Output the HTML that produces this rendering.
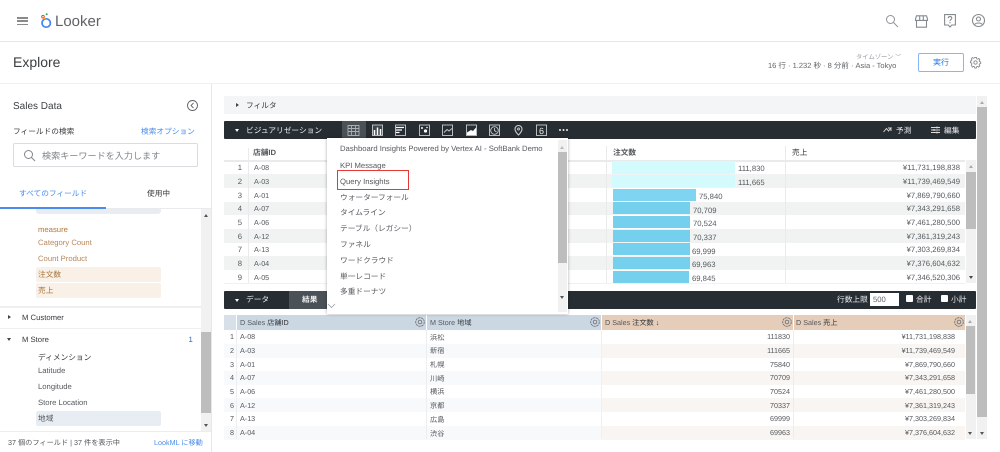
<!DOCTYPE html>
<html lang="ja"><head><meta charset="utf-8"><title>Looker Explore</title>
<style>
html,body{margin:0;padding:0;background:#fff}
body{width:1000px;height:452px;overflow:hidden}
#w{position:relative;width:1000px;height:452px;overflow:hidden;font-family:"Liberation Sans","Noto Sans CJK JP",sans-serif;font-size:7.7px;color:#55595e;text-rendering:geometricPrecision;filter:blur(.25px)}
.t{position:absolute;white-space:nowrap;line-height:12px;margin-top:1px}
.b{position:absolute}
.r{text-align:right}
.d{color:#34383b}
.l{color:#4a8bec}
.o{color:#b8875a}
.n{font-size:7.2px;margin-top:.5px}
svg{position:absolute;overflow:visible}
</style></head><body><div id="w">

<!-- top header -->
<div class="b" style="left:0;top:41px;width:1000px;height:1px;background:#e6e7e8"></div>
<div class="b" style="left:17px;top:17px;width:11px;height:1.6px;background:#8a8a8a"></div>
<div class="b" style="left:17px;top:20.300px;width:11px;height:1.6px;background:#8a8a8a"></div>
<div class="b" style="left:17px;top:23.600px;width:11px;height:1.6px;background:#8a8a8a"></div>
<svg style="left:40px;top:12px" width="14" height="18" viewBox="0 0 14 18"><circle cx="6.200" cy="11" r="4.200" fill="none" stroke="#4285f4" stroke-width="1.700"/><circle cx="3" cy="4.700" r="1.300" fill="none" stroke="#ea4335" stroke-width="1"/><circle cx="6.700" cy="2.300" r="1" fill="#34a853"/><path d="M4 5.800L5.300 7.300" stroke="#fbbc04" stroke-width="1.100"/></svg>
<div class="t" style="left:55px;top:8.500px;font-size:15px;line-height:24px;color:#5f6368">Looker</div>
<svg style="left:886px;top:15px" width="12" height="12" viewBox="0 0 12 12" fill="none" stroke="#8f9498" stroke-width="1"><circle cx="4.500" cy="4.500" r="4"/><path d="M7.500 7.500l4.500 4.500"/></svg>
<svg style="left:915px;top:15px" width="13" height="13" viewBox="0 0 13 13" fill="none" stroke="#858a8e" stroke-width="1.100"><path d="M1.500 .8h10l1 3.200v1.400H.5V4zM1.500 5.400v6.800h10V5.400M4.700 .8v4.600M8.300 .8v4.600"/></svg>
<svg style="left:943.500px;top:14px" width="12" height="14" viewBox="0 0 12 14" fill="none" stroke="#858a8e" stroke-width="1.100"><path d="M.6.600h10.800v10.400H7.800L6 13 4.200 11H.6z"/><path d="M4.200 4.200c0-2.200 3.600-2.200 3.600 0 0 1.400-1.800 1.400-1.800 2.900M6 8v1.200"/></svg>
<svg style="left:972px;top:14px" width="13" height="13" viewBox="0 0 13 13" fill="none" stroke="#858a8e" stroke-width="1.100"><circle cx="6.500" cy="6.500" r="6"/><circle cx="6.500" cy="5" r="2"/><path d="M2.800 10.500c1-2 6.400-2 7.400 0"/></svg>

<!-- explore row -->
<div class="t" style="left:13px;top:51px;font-size:14px;line-height:20px;color:#3c4043">Explore</div>
<div class="b" style="left:0;top:82.500px;width:1000px;height:1.500px;background:#f0f1f2"></div>
<div class="t" style="left:856px;top:51px;font-size:6.300px;color:#9aa0a6">タイムゾーン ﹀</div>
<div class="t" style="left:768px;top:58.500px;font-size:7.500px;color:#5f6368">16 行 · 1.232 秒 · 8 分前 · Asia - Tokyo</div>
<div class="b" style="left:918px;top:53px;width:44px;height:17px;border:1px solid #8ab4f8;border-radius:2px;color:#1a73e8;text-align:center;line-height:17px;font-size:8px">実行</div>
<svg style="left:970px;top:57px" width="11" height="11" viewBox="0 0 11 11" fill="none" stroke="#80868b" stroke-width=".9"><circle cx="5.500" cy="5.500" r="1.700"/><path d="M4.600.5h1.800l.3 1.400 1.100.5 1.200-.8 1.200 1.300-.8 1.100.5 1.100 1.200.3v1.800l-1.300.3-.5 1.100.8 1.100-1.300 1.300-1.100-.8-1.100.5-.3 1.300H4.600l-.3-1.300-1.100-.5-1.100.8L.8 8.700l.8-1.100-.5-1.100-1.300-.3V4.400l1.300-.3.5-1.100-.8-1.100L2.100.6l1.100.8 1.100-.5z" transform="translate(.5 0) scale(.92)"/></svg>

<!-- left panel -->
<div class="b" style="left:211px;top:84px;width:1px;height:368px;background:#e6e7e8"></div>
<div class="t" style="left:13px;top:100px;font-size:10px;color:#3c4043">Sales Data</div>
<svg style="left:187px;top:100px" width="11" height="11" viewBox="0 0 11 11" fill="none" stroke="#5f6368" stroke-width=".9"><circle cx="5.500" cy="5.500" r="5"/><path d="M6.500 3L4 5.500 6.500 8"/></svg>
<div class="t d" style="left:13px;top:125px">フィールドの検索</div>
<div class="t l" style="left:141px;top:125px">検索オプション</div>
<div class="b" style="left:13px;top:143px;width:183px;height:22px;border:1px solid #dadce0;border-radius:2px"></div>
<svg style="left:23px;top:148.500px" width="13" height="13" viewBox="0 0 13 13" fill="none" stroke="#80868b" stroke-width="1"><circle cx="5.500" cy="5.500" r="4"/><path d="M8.500 8.500l3.500 3.500"/></svg>
<div class="t" style="left:42px;top:148.500px;font-size:9.100px;color:#80868b">検索キーワードを入力します</div>
<div class="t l" style="left:19px;top:187px">すべてのフィールド</div>
<div class="t d" style="left:147px;top:187px">使用中</div>
<div class="b" style="left:0;top:208px;width:211px;height:1px;background:#e8eaed"></div>
<div class="b" style="left:0;top:207px;width:106px;height:1.500px;background:#4a8bec"></div>
<div class="b" style="left:36px;top:209px;width:125px;height:5px;background:#e8edf4;border-radius:0 0 3px 3px"></div>
<div class="b" style="left:201px;top:209px;width:10px;height:222px;background:#f1f1f1"></div>
<div class="b" style="left:201px;top:332px;width:10px;height:81px;background:#bdbdbd"></div>
<div class="b" style="left:203.500px;top:214px;border:2.500px solid transparent;border-top:0;border-bottom:3px solid #555"></div>
<div class="b" style="left:203.500px;top:424px;border:2.500px solid transparent;border-bottom:0;border-top:3px solid #555"></div>

<div class="t" style="left:38px;top:223px;color:#b5763a">measure</div>
<div class="t o" style="left:38px;top:236px">Category Count</div>
<div class="t o" style="left:38px;top:252px">Count Product</div>
<div class="b" style="left:36px;top:267px;width:125px;height:15px;background:#f9f0e8;border-radius:2px"></div>
<div class="b" style="left:36px;top:283px;width:125px;height:15px;background:#f9f0e8;border-radius:2px"></div>
<div class="t" style="left:38px;top:268px;color:#a9773f">注文数</div>
<div class="t" style="left:38px;top:284px;color:#a9773f">売上</div>
<div class="b" style="left:0;top:306px;width:201px;height:2px;background:#eeeff0"></div>
<div class="b" style="left:8px;top:315px;border:2.500px solid transparent;border-right:0;border-left:3px solid #444"></div>
<div class="t d" style="left:22px;top:311px">M Customer</div>
<div class="b" style="left:0;top:328px;width:201px;height:1px;background:#eeeff0"></div>
<div class="b" style="left:7px;top:338px;border:2.500px solid transparent;border-bottom:0;border-top:3px solid #444"></div>
<div class="t d" style="left:22px;top:333px">M Store</div>
<div class="t" style="left:188.500px;top:333px;color:#3367b5">1</div>
<div class="t d" style="left:38px;top:351px">ディメンション</div>
<div class="t" style="left:38px;top:364px">Latitude</div>
<div class="t" style="left:38px;top:380px">Longitude</div>
<div class="t" style="left:38px;top:396px">Store Location</div>
<div class="b" style="left:36px;top:411px;width:125px;height:15px;background:#e8edf4;border-radius:2px"></div>
<div class="t" style="left:38px;top:412px">地域</div>
<div class="b" style="left:0;top:431px;width:211px;height:21px;background:#fff;border-top:1px solid #eceded"></div>
<div class="t" style="left:8px;top:436px;font-size:7.200px">37 個のフィールド | 37 件を表示中</div>
<div class="t l" style="left:154px;top:436px;font-size:7.200px">LookML に移動</div>

<!-- main -->
<div class="b" style="left:224px;top:96px;width:752px;height:18px;background:#f4f5f6"></div>
<div class="b" style="left:236px;top:103px;border:2.500px solid transparent;border-right:0;border-left:3px solid #444"></div>
<div class="t d" style="left:246px;top:99px">フィルタ</div>

<div class="b" style="left:977px;top:96px;width:10px;height:343px;background:#f1f1f1"></div>
<div class="b" style="left:977px;top:107px;width:10px;height:310px;background:#bdbdbd"></div>
<div class="b" style="left:979.500px;top:101px;border:2.500px solid transparent;border-top:0;border-bottom:3px solid #aaa"></div>
<div class="b" style="left:979.500px;top:432px;border:2.500px solid transparent;border-bottom:0;border-top:3px solid #555"></div>

<!-- vis bar -->
<div class="b" style="left:224px;top:121px;width:752px;height:18px;background:#262d33;border-radius:1px"></div>
<div class="b" style="left:235px;top:129px;border:2.500px solid transparent;border-bottom:0;border-top:3px solid #fff"></div>
<div class="t" style="left:246px;top:123.500px;color:#eef0f1">ビジュアリゼーション</div>
<div class="b" style="left:342px;top:121px;width:24px;height:18px;background:#4a5157"></div>
<svg style="left:348px;top:124px" width="225" height="14" viewBox="0 0 225 14" fill="none" stroke="#c9ccce" stroke-width=".9">
<path d="M0 1.500h11v10H0zM0 4.500h11M0 7.500h11M3.500 1.500v10M7.500 1.500v10" stroke="#aab0b5"/>
<g transform="translate(24 0)"><rect x=".5" y="1" width="10" height="10.500" fill="#3e464c"/><path d="M2.500 11V6M5.500 11V3.500M8.500 11V5" stroke="#fff" stroke-width="1.500"/></g>
<g transform="translate(47 0)"><rect x=".5" y="1" width="10" height="10.500"/><path d="M1 3.500h8M1 6h6M1 8.500h3.500" stroke="#fff" stroke-width="1.300"/></g>
<g transform="translate(71 0)"><rect x=".5" y="1" width="10" height="10.500"/><circle cx="6.500" cy="7" r="1.600" fill="#fff" stroke="none"/><circle cx="3" cy="4" r="1" fill="#fff" stroke="none"/><circle cx="8" cy="3.500" r=".8" fill="#fff" stroke="none"/></g>
<g transform="translate(94 0)"><rect x=".5" y="1" width="10" height="10.500"/><path d="M2 8.500l3-3 2 1.500 3-2.500"/></g>
<g transform="translate(118 0)"><rect x=".5" y="1" width="10" height="10.500"/><path d="M1 11V8.500L5 6l2 1 3-3.500V11z" fill="#fff" stroke="none"/></g>
<g transform="translate(141 0)"><rect x=".5" y="1" width="10" height="10.500"/><circle cx="5.500" cy="6.500" r="3.800"/><path d="M5.500 4v2.500l2 1.500"/></g>
<g transform="translate(165 0)"><path d="M5.500 1.500a3.500 3.500 0 0 1 3.500 3.500c0 2.500-3.500 6-3.500 6S2 7.500 2 5a3.500 3.500 0 0 1 3.500-3.500z" stroke-width="1.100"/><circle cx="5.500" cy="5" r="1"/></g>
<g transform="translate(188 0)"><rect x=".5" y="1" width="10" height="10.500"/></g>
</svg>
<div class="t" style="left:536px;top:123.500px;width:11px;text-align:center;font-size:9px;color:#eee">6</div>
<div class="b" style="left:558.500px;top:128.500px;width:2px;height:2px;background:#eee;border-radius:50%;box-shadow:3.500px 0 #eee,7px 0 #eee"></div>
<svg style="left:883px;top:126px" width="9" height="8" viewBox="0 0 9 8" fill="none" stroke="#ddd" stroke-width=".9"><path d="M.5 6l3-3.500 2 2.500L8.500 1.500M5 2h3v3"/></svg>
<div class="t" style="left:896px;top:123.500px;color:#e8eaed">予測</div>
<svg style="left:931px;top:126px" width="9" height="8" viewBox="0 0 9 8" fill="none" stroke="#ddd" stroke-width="1"><path d="M0 1.500h9M0 4h9M0 6.500h9M6 .5v2M3 3v2M6 5.500v2"/></svg>
<div class="t" style="left:944px;top:123.500px;color:#e8eaed">編集</div>

<!-- vis table -->
<div class="b" style="left:224px;top:160px;width:741px;height:1.500px;background:#e8eaeb"></div>
<div class="b" style="left:224px;top:174px;width:741px;height:13.700px;background:#f1f3f2"></div>
<div class="b" style="left:224px;top:201.500px;width:741px;height:13.700px;background:#f1f3f2"></div>
<div class="b" style="left:224px;top:229px;width:741px;height:13.500px;background:#f1f3f2"></div>
<div class="b" style="left:224px;top:256px;width:741px;height:13.500px;background:#f1f3f2"></div>
<div class="b" style="left:248px;top:148px;width:1px;height:135px;background:#e8eaeb"></div>
<div class="b" style="left:606px;top:146px;width:1px;height:137px;background:#e8eaeb"></div>
<div class="b" style="left:785px;top:146px;width:1px;height:137px;background:#e8eaeb"></div>
<div class="b" style="left:224px;top:283px;width:741px;height:1px;background:#f0f1f2"></div>
<div class="t" style="left:253px;top:146px;font-weight:bold;color:#55595d">店舗ID</div>
<div class="t" style="left:613px;top:146px;font-weight:bold;color:#55595d">注文数</div>
<div class="t d" style="left:792px;top:146px">売上</div>

<div class="t r" style="left:224px;top:161px;width:18px">1</div><div class="t n" style="left:254px;top:161.500px">A-08</div>
<div class="t r" style="left:224px;top:175px;width:18px">2</div><div class="t n" style="left:254px;top:175px">A-03</div>
<div class="t r" style="left:224px;top:189px;width:18px">3</div><div class="t n" style="left:254px;top:189px">A-01</div>
<div class="t r" style="left:224px;top:202px;width:18px">4</div><div class="t n" style="left:254px;top:202.500px">A-07</div>
<div class="t r" style="left:224px;top:216px;width:18px">5</div><div class="t n" style="left:254px;top:216px">A-06</div>
<div class="t r" style="left:224px;top:230px;width:18px">6</div><div class="t n" style="left:254px;top:230px">A-12</div>
<div class="t r" style="left:224px;top:243px;width:18px">7</div><div class="t n" style="left:254px;top:243.500px">A-13</div>
<div class="t r" style="left:224px;top:257px;width:18px">8</div><div class="t n" style="left:254px;top:257px">A-04</div>
<div class="t r" style="left:224px;top:271px;width:18px">9</div><div class="t n" style="left:254px;top:271px">A-05</div>

<div class="b" style="left:612px;top:161px;width:123px;height:12.500px;background:#d3fbfd"></div>
<div class="b" style="left:612px;top:174.500px;width:123px;height:12.500px;background:#d3fbfd"></div>
<div class="b" style="left:612.500px;top:188.500px;width:83px;height:12px;background:#7fd5f1"></div>
<div class="b" style="left:612.500px;top:202px;width:77.500px;height:12px;background:#75d0ee"></div>
<div class="b" style="left:612.500px;top:216px;width:77.500px;height:12px;background:#75d0ee"></div>
<div class="b" style="left:612.500px;top:229.500px;width:77.500px;height:12px;background:#75d0ee"></div>
<div class="b" style="left:612.500px;top:243px;width:77px;height:12px;background:#75d0ee"></div>
<div class="b" style="left:612.500px;top:257px;width:77px;height:12px;background:#75d0ee"></div>
<div class="b" style="left:612.500px;top:270.500px;width:76.500px;height:12px;background:#75d0ee"></div>
<div class="t" style="left:738px;top:162px">111,830</div>
<div class="t" style="left:738px;top:176px">111,665</div>
<div class="t" style="left:699px;top:190px">75,840</div>
<div class="t" style="left:693px;top:203.500px">70,709</div>
<div class="t" style="left:693px;top:217px">70,524</div>
<div class="t" style="left:693px;top:231px">70,337</div>
<div class="t" style="left:692px;top:245px">69,999</div>
<div class="t" style="left:692px;top:258px">69,963</div>
<div class="t" style="left:692px;top:272px">69,845</div>
<div class="t r" style="left:800px;width:160px;top:161px">¥11,731,198,838</div>
<div class="t r" style="left:800px;width:160px;top:174.500px">¥11,739,469,549</div>
<div class="t r" style="left:800px;width:160px;top:188.500px">¥7,869,790,660</div>
<div class="t r" style="left:800px;width:160px;top:202px">¥7,343,291,658</div>
<div class="t r" style="left:800px;width:160px;top:215.500px">¥7,461,280,500</div>
<div class="t r" style="left:800px;width:160px;top:229.500px">¥7,361,319,243</div>
<div class="t r" style="left:800px;width:160px;top:243px">¥7,303,269,834</div>
<div class="t r" style="left:800px;width:160px;top:256.500px">¥7,376,604,632</div>
<div class="t r" style="left:800px;width:160px;top:270.500px">¥7,346,520,306</div>
<div class="b" style="left:966px;top:160px;width:10px;height:123px;background:#f1f1f1"></div>
<div class="b" style="left:966px;top:172px;width:10px;height:57px;background:#bdbdbd"></div>
<div class="b" style="left:968.500px;top:165px;border:2.500px solid transparent;border-top:0;border-bottom:3px solid #aaa"></div>
<div class="b" style="left:968.500px;top:276px;border:2.500px solid transparent;border-bottom:0;border-top:3px solid #444"></div>

<!-- data bar -->
<div class="b" style="left:224px;top:291px;width:752px;height:17.500px;background:#262d33;border-radius:1px"></div>
<div class="b" style="left:235px;top:299px;border:2.500px solid transparent;border-bottom:0;border-top:3px solid #fff"></div>
<div class="t" style="left:246px;top:293px;color:#eef0f1">データ</div>
<div class="b" style="left:289px;top:291px;width:40px;height:17.500px;background:#4a5157"></div>
<div class="t" style="left:302px;top:293px;font-weight:bold;color:#eef0f1">結果</div>
<div class="t" style="left:837px;top:292.500px;color:#e8eaed">行数上限</div>
<div class="b" style="left:870px;top:293px;width:29px;height:13px;background:#fff;line-height:13px;color:#5f6368;text-indent:3px">500</div>
<div class="b" style="left:906px;top:295px;width:7px;height:7px;background:#fff;border-radius:1px"></div>
<div class="t" style="left:916px;top:292.500px;color:#e8eaed">合計</div>
<div class="b" style="left:941px;top:295px;width:7px;height:7px;background:#fff;border-radius:1px"></div>
<div class="t" style="left:951px;top:292.500px;color:#e8eaed">小計</div>

<!-- data table -->
<div class="b" style="left:224px;top:315px;width:12px;height:14.500px;background:#d7e0e9"></div>
<div class="b" style="left:236.500px;top:315px;width:189px;height:14.500px;background:#cbd8e4"></div>
<div class="b" style="left:426.500px;top:315px;width:174.500px;height:14.500px;background:#cbd8e4"></div>
<div class="b" style="left:602px;top:315px;width:190.500px;height:14.500px;background:#e5cdb9"></div>
<div class="b" style="left:793.500px;top:315px;width:171.500px;height:14.500px;background:#e5cdb9"></div>
<div class="t n" style="left:240px;top:316px">D Sales <span style="color:#34383b">店舗ID</span></div>
<div class="t n" style="left:430px;top:316px">M Store <span style="color:#34383b">地域</span></div>
<div class="t n" style="left:605px;top:316px">D Sales <span style="color:#34383b">注文数 ↓</span></div>
<div class="t n" style="left:796px;top:316px">D Sales <span style="color:#34383b">売上</span></div>
<svg style="left:415px;top:317px" width="10" height="10" viewBox="0 0 10 10" fill="none" stroke="#6f7478" stroke-width=".9"><circle cx="5" cy="5" r="4.300" stroke-dasharray="2.400 .6"/><circle cx="5" cy="5" r="1.800"/></svg>
<svg style="left:590px;top:317px" width="10" height="10" viewBox="0 0 10 10" fill="none" stroke="#6f7478" stroke-width=".9"><circle cx="5" cy="5" r="4.300" stroke-dasharray="2.400 .6"/><circle cx="5" cy="5" r="1.800"/></svg>
<svg style="left:781.500px;top:317px" width="10" height="10" viewBox="0 0 10 10" fill="none" stroke="#6f7478" stroke-width=".9"><circle cx="5" cy="5" r="4.300" stroke-dasharray="2.400 .6"/><circle cx="5" cy="5" r="1.800"/></svg>
<svg style="left:954px;top:317px" width="10" height="10" viewBox="0 0 10 10" fill="none" stroke="#6f7478" stroke-width=".9"><circle cx="5" cy="5" r="4.300" stroke-dasharray="2.400 .6"/><circle cx="5" cy="5" r="1.800"/></svg>

<div class="b" style="left:224px;top:344px;width:378px;height:13.500px;background:#f7f9fb"></div>
<div class="b" style="left:224px;top:371px;width:378px;height:13.500px;background:#f7f9fb"></div>
<div class="b" style="left:224px;top:398px;width:378px;height:13.500px;background:#f7f9fb"></div>
<div class="b" style="left:224px;top:426px;width:378px;height:13.500px;background:#f7f9fb"></div>
<div class="b" style="left:602px;top:344px;width:363px;height:13.500px;background:#f8f5f2"></div>
<div class="b" style="left:602px;top:371px;width:363px;height:13.500px;background:#f8f5f2"></div>
<div class="b" style="left:602px;top:398px;width:363px;height:13.500px;background:#f8f5f2"></div>
<div class="b" style="left:602px;top:426px;width:363px;height:13.500px;background:#f8f5f2"></div>
<div class="b" style="left:236px;top:330px;width:1px;height:109px;background:#eceff2"></div>
<div class="b" style="left:426px;top:330px;width:1px;height:109px;background:#eceff2"></div>
<div class="b" style="left:601px;top:330px;width:1px;height:109px;background:#eef0f2"></div>
<div class="b" style="left:793px;top:330px;width:1px;height:109px;background:#efecea"></div>

<div class="t r n" style="left:224px;width:10px;top:330.500px">1</div><div class="t n" style="left:240px;top:330.500px">A-08</div><div class="t n" style="left:430px;top:331px">浜松</div><div class="t r n" style="left:640px;width:150px;top:330.500px">111830</div><div class="t r n" style="left:800px;width:155px;top:330.500px">¥11,731,198,838</div>
<div class="t r n" style="left:224px;width:10px;top:344px">2</div><div class="t n" style="left:240px;top:344px">A-03</div><div class="t n" style="left:430px;top:344.500px">新宿</div><div class="t r n" style="left:640px;width:150px;top:344px">111665</div><div class="t r n" style="left:800px;width:155px;top:344px">¥11,739,469,549</div>
<div class="t r n" style="left:224px;width:10px;top:358px">3</div><div class="t n" style="left:240px;top:358px">A-01</div><div class="t n" style="left:430px;top:358.500px">札幌</div><div class="t r n" style="left:640px;width:150px;top:358px">75840</div><div class="t r n" style="left:800px;width:155px;top:358px">¥7,869,790,660</div>
<div class="t r n" style="left:224px;width:10px;top:371.500px">4</div><div class="t n" style="left:240px;top:371.500px">A-07</div><div class="t n" style="left:430px;top:372px">川崎</div><div class="t r n" style="left:640px;width:150px;top:371.500px">70709</div><div class="t r n" style="left:800px;width:155px;top:371.500px">¥7,343,291,658</div>
<div class="t r n" style="left:224px;width:10px;top:385px">5</div><div class="t n" style="left:240px;top:385px">A-06</div><div class="t n" style="left:430px;top:385.500px">横浜</div><div class="t r n" style="left:640px;width:150px;top:385px">70524</div><div class="t r n" style="left:800px;width:155px;top:385px">¥7,461,280,500</div>
<div class="t r n" style="left:224px;width:10px;top:399px">6</div><div class="t n" style="left:240px;top:399px">A-12</div><div class="t n" style="left:430px;top:399.500px">京都</div><div class="t r n" style="left:640px;width:150px;top:399px">70337</div><div class="t r n" style="left:800px;width:155px;top:399px">¥7,361,319,243</div>
<div class="t r n" style="left:224px;width:10px;top:412.500px">7</div><div class="t n" style="left:240px;top:412.500px">A-13</div><div class="t n" style="left:430px;top:413px">広島</div><div class="t r n" style="left:640px;width:150px;top:412.500px">69999</div><div class="t r n" style="left:800px;width:155px;top:412.500px">¥7,303,269,834</div>
<div class="t r n" style="left:224px;width:10px;top:426px">8</div><div class="t n" style="left:240px;top:426px">A-04</div><div class="t n" style="left:430px;top:427px">渋谷</div><div class="t r n" style="left:640px;width:150px;top:426px">69963</div><div class="t r n" style="left:800px;width:155px;top:426px">¥7,376,604,632</div>
<div class="b" style="left:966px;top:315px;width:10px;height:124px;background:#f1f1f1"></div>
<div class="b" style="left:966px;top:326px;width:9px;height:68px;background:#bdbdbd"></div>
<div class="b" style="left:968px;top:320px;border:2.500px solid transparent;border-top:0;border-bottom:3px solid #aaa"></div>
<div class="b" style="left:968px;top:432px;border:2.500px solid transparent;border-bottom:0;border-top:3px solid #555"></div>

<!-- dropdown -->
<div class="b" style="left:327px;top:138px;width:241px;height:176px;background:#fff;box-shadow:0 0 3px rgba(0,0,0,.35)"></div>
<div class="t" style="left:340px;top:142px">Dashboard Insights Powered by Vertex AI - SoftBank Demo</div>
<div class="t" style="left:340px;top:159px">KPI Message</div>
<div class="t" style="left:340px;top:175px">Query Insights</div>
<div class="t" style="left:340px;top:191px">ウォーターフォール</div>
<div class="t" style="left:340px;top:206px">タイムライン</div>
<div class="t" style="left:340px;top:222px">テーブル（レガシー）</div>
<div class="t" style="left:340px;top:238px">ファネル</div>
<div class="t" style="left:340px;top:254px">ワードクラウド</div>
<div class="t" style="left:340px;top:270px">単一レコード</div>
<div class="t" style="left:340px;top:285px">多重ドーナツ</div>
<div class="b" style="left:337px;top:170px;width:70px;height:17.500px;border:1px solid #e53935"></div>
<div class="b" style="left:558px;top:140px;width:9px;height:172px;background:#f1f1f1"></div>
<div class="b" style="left:558px;top:152px;width:9px;height:111px;background:#bdbdbd"></div>
<div class="b" style="left:560px;top:146px;border:2.500px solid transparent;border-top:0;border-bottom:3px solid #bbb"></div>
<div class="b" style="left:560px;top:296px;border:2.500px solid transparent;border-bottom:0;border-top:3px solid #555"></div>
<svg style="left:327px;top:303px" width="9" height="6" viewBox="0 0 9 6" fill="none" stroke="#9aa0a6" stroke-width=".8"><path d="M1 1l3.500 3.500L8 1"/></svg>

</div></body></html>
